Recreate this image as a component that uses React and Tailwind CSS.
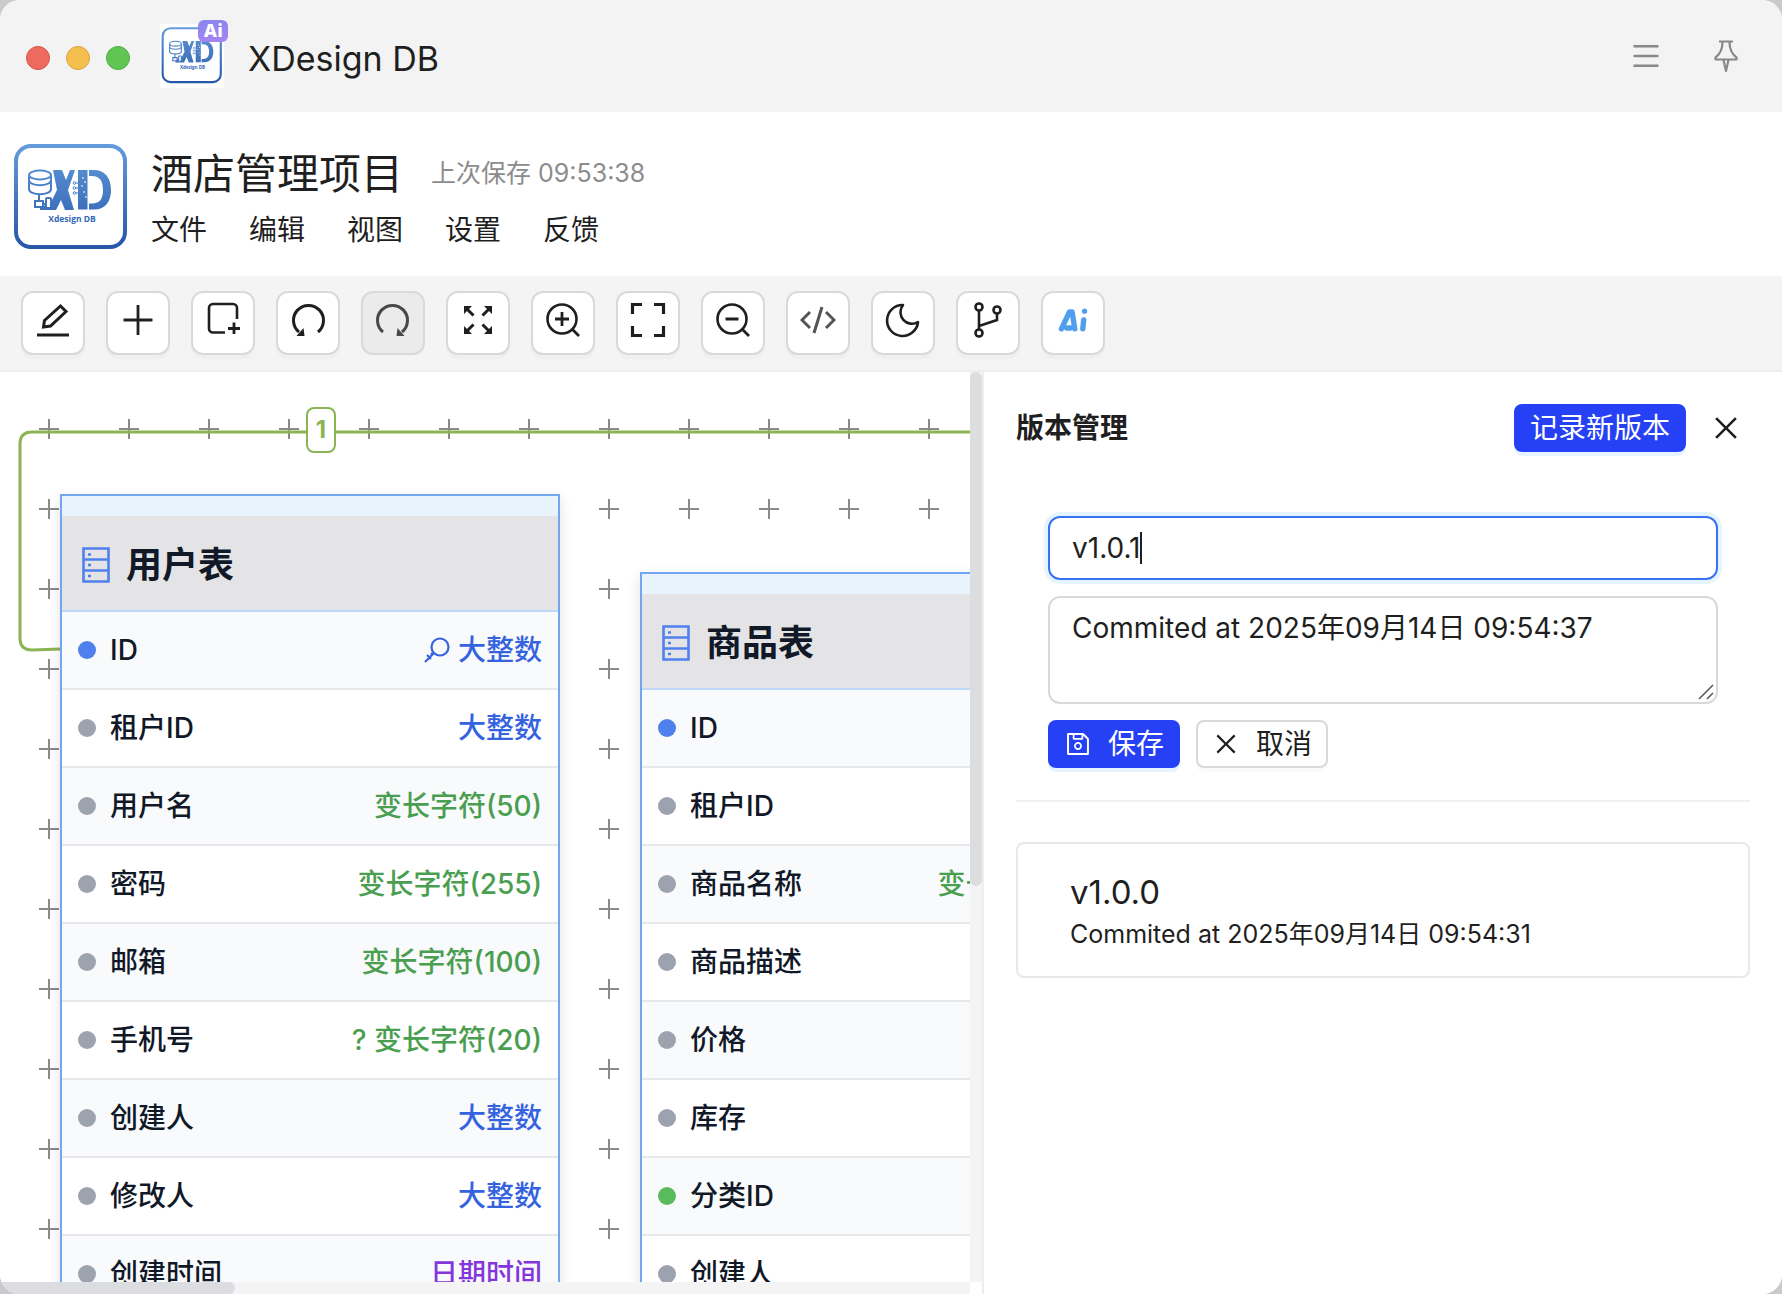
import { useState } from 'react';
import { AiOutlineClose, AiOutlineSave, AiOutlineMenu } from 'react-icons/ai';

const Svg = ({ children, size = 36, ...rest }) => (
  <svg
    width={size}
    height={size}
    viewBox="0 0 36 36"
    fill="none"
    stroke="currentColor"
    strokeWidth="2.6"
    aria-hidden="true"
    {...rest}
  >
    {children}
  </svg>
);

const EditIcon = () => (
  <Svg>
    <path d="M2 33h32" strokeWidth="3" />
    <path d="M8.500 25l1-6.500L25.500 4l5.500 5.500L15.500 24z" strokeWidth="3" />
  </Svg>
);

const PlusIcon = () => (
  <Svg>
    <path d="M18 3v30M3.500 18h29" strokeWidth="2.800" />
  </Svg>
);

const AddBoxIcon = () => (
  <Svg>
    <path d="M20 30.500H8a4 4 0 0 1-4-4V6a4 4 0 0 1 4-4h20a4 4 0 0 1 4 4v11" />
    <path d="M29 20.500v11.500M23 26.500h12" strokeWidth="2.800" />
  </Svg>
);

const UndoIcon = () => (
  <Svg>
    <path d="M28 30A15 15 0 1 0 9 30" strokeWidth="3" />
    <path d="M6.500 34h8l-1-8z" fill="currentColor" strokeWidth="0" />
  </Svg>
);

const RedoIcon = () => (
  <Svg>
    <path d="M8 30A15 15 0 1 1 27 30" strokeWidth="3" />
    <path d="M29.500 34h-8l1-8z" fill="currentColor" strokeWidth="0" />
  </Svg>
);

const ExpandIcon = () => (
  <Svg>
    <path d="M6 6l7.500 7.500M30 6l-7.500 7.500M6 30l7.500-7.500M30 30l-7.500-7.500" strokeWidth="3" />
    <path
      d="M4 4h8l-8 8zM32 4v8l-8-8zM4 32v-8l8 8zM32 32h-8l8-8z"
      fill="currentColor"
      strokeWidth="0"
    />
  </Svg>
);

const ZoomInIcon = () => (
  <Svg>
    <circle cx="17" cy="17" r="14.500" />
    <path d="M27 27l7 7M17 10v14M10 17h14" strokeWidth="2.800" />
  </Svg>
);

const ZoomOutIcon = () => (
  <Svg>
    <circle cx="17" cy="17" r="14.500" />
    <path d="M27 27l7 7M10.500 17h13" strokeWidth="2.800" />
  </Svg>
);

const FrameIcon = () => (
  <Svg>
    <path d="M2.500 12V2.500H12M24 2.500h9.500V12M33.500 24v9.500H24M12 33.500H2.500V24" strokeWidth="3.200" />
  </Svg>
);

const CodeIcon = () => (
  <Svg stroke="#555">
    <path d="M10 10l-8 8 8 8M26 10l8 8-8 8M22 5l-8 26" strokeWidth="3" />
  </Svg>
);

const MoonIcon = () => (
  <Svg>
    <path d="M18 3A15.500 15.500 0 1 0 33 20A11.500 11.500 0 0 1 18 3z" strokeLinejoin="round" />
  </Svg>
);

const BranchIcon = () => (
  <Svg>
    <circle cx="9" cy="5" r="3.500" />
    <circle cx="27" cy="8" r="3.500" />
    <circle cx="9" cy="31" r="3.500" />
    <path d="M9 9v18M27 12v6L9 24" />
  </Svg>
);

const AiMark = () => (
  <Svg size={32} strokeLinecap="round" strokeLinejoin="round" strokeWidth="6">
    <path d="M5 28L14 9h3l3 19M11 27h4" />
    <path d="M30 18l-1 10M31 8v.1" />
  </Svg>
);

const PinIcon = () => (
  <Svg size={32} viewBox="0 0 32 32" strokeWidth="2.200" strokeLinejoin="round">
    <path d="M9 1.500h14M12.500 2c0 6-1 11-7 15.500v2h21v-2c-6-4.500-7-9.500-7-15.500M13.500 20l2.500 11 2.500-11" />
  </Svg>
);

const tools = [
  { label: '编辑', icon: EditIcon },
  { label: '新增', icon: PlusIcon },
  { label: '新增区域', icon: AddBoxIcon },
  { label: '撤销', icon: UndoIcon },
  { label: '重做', icon: RedoIcon, disabled: true },
  { label: '展开', icon: ExpandIcon },
  { label: '放大', icon: ZoomInIcon },
  { label: '适应画布', icon: FrameIcon },
  { label: '缩小', icon: ZoomOutIcon },
  { label: '代码', icon: CodeIcon },
  { label: '深色模式', icon: MoonIcon },
  { label: '版本管理', icon: BranchIcon },
  { label: 'AI', icon: AiMark, ai: true },
];

const menus = ['文件', '编辑', '视图', '设置', '反馈'];

const userTable = {
  name: '用户表',
  fields: [
    { name: 'ID', type: '大整数', kind: 'int', dot: 'primary', pk: true },
    { name: '租户ID', type: '大整数', kind: 'int' },
    { name: '用户名', type: '变长字符(50)', kind: 'string' },
    { name: '密码', type: '变长字符(255)', kind: 'string' },
    { name: '邮箱', type: '变长字符(100)', kind: 'string' },
    { name: '手机号', type: '? 变长字符(20)', kind: 'string' },
    { name: '创建人', type: '大整数', kind: 'int' },
    { name: '修改人', type: '大整数', kind: 'int' },
    { name: '创建时间', type: '日期时间', kind: 'date' },
  ],
};

const goodsTable = {
  name: '商品表',
  fields: [
    { name: 'ID', dot: 'primary' },
    { name: '租户ID' },
    { name: '商品名称', type: '变长字符(255)', kind: 'string' },
    { name: '商品描述' },
    { name: '价格' },
    { name: '库存' },
    { name: '分类ID', dot: 'foreign' },
    { name: '创建人' },
  ],
};

const dotColors = {
  primary: 'bg-[#4f80ee]',
  foreign: 'bg-[#5abb5e]',
};

const typeColors = {
  int: 'text-[#3563e0]',
  string: 'text-[#4a9e50]',
  date: 'text-[#8436dc]',
};

const Logo = ({ className, id }) => (
  <svg className={className} viewBox="0 0 120 120" role="img" aria-label="XDesign DB">
    <defs>
      <linearGradient id={id} x1="0" y1="0" x2="0" y2="120" gradientUnits="userSpaceOnUse">
        <stop offset="0" stopColor="#68a0e0" />
        <stop offset="1" stopColor="#2050a4" />
      </linearGradient>
    </defs>
    <rect width="120" height="120" fill="#fff" />
    <rect x="5" y="8" width="109" height="101" rx="15" fill="#fff" stroke={`url(#${id})`} strokeWidth="4" />
    <g fill={`url(#${id})`}>
      <path d="M42 32h9l4 10 4-10h5L57 52l6 20H54l-4-10-5 10h-9l10-20z" />
      <path d="M67 32h9.500v39.500H67z" />
      <path d="M78 32h5c11 0 17 8 17 20s-6 19.500-17 19.500h-5v-6h3c8 0 11-5 11-13.500s-3-14-11-14h-3z" />
      <path d="M29 70l4-3 4 5h-8z" />
    </g>
    <g fill="none" stroke={`url(#${id})`} strokeWidth="2">
      <path d="M18 37v14c0 7 22 7 22 0V37" fill="#fff" />
      <ellipse cx="29" cy="37" rx="11" ry="4.500" fill="#fff" />
      <path d="M18 42c0 7 22 7 22 0M28 56v7M24 63h8v6h-8zM32 66h3" />
      <rect x="35" y="60" width="5" height="10" rx="1" fill="#fff" />
    </g>
    <g fill="#fff" stroke={`url(#${id})`} strokeWidth="1">
      <path d="M64 45h4M64 50h4M64 55h4" />
      <circle cx="63.500" cy="45" r="1.300" />
      <circle cx="63.500" cy="50" r="1.300" />
      <circle cx="63.500" cy="55" r="1.300" />
    </g>
    <path d="M71 40h2M73 44h2M70 48h2M72 54h2M74 59h2" stroke="#fff" strokeWidth="1.200" />
    <text x="61" y="84" textAnchor="middle" fontSize="8.500" fontWeight="700" fill="#3467b8" fontFamily="Open Sans, sans-serif">
      Xdesign DB
    </text>
  </svg>
);

const ServerIcon = () => (
  <svg width="28" height="36" viewBox="0 0 28 36" fill="none" stroke="#4f80ee" strokeWidth="2.600" aria-hidden="true">
    <path d="M1.500 1.500h25v33h-25zM1.500 12.500h25M1.500 23.500h25" />
    <path d="M6 7.500h3M6 18h3M6 29h3" />
  </svg>
);

const KeyIcon = () => (
  <svg width="26" height="26" viewBox="0 0 26 26" fill="none" stroke="currentColor" strokeWidth="2.200" aria-hidden="true">
    <circle cx="16" cy="10" r="8.500" />
    <path d="M10 16l-9 9M3 18l4 4M7 16l2 2" />
  </svg>
);

const TableCard = ({ table, className }) => (
  <section
    className={`absolute w-[500px] border-2 border-[#73a5f0] bg-white shadow-[0_4px_12px_rgba(0,0,0,0.12)] ${className}`}
  >
    <div className="h-5 bg-[#e9f3fe]" />
    <h2 className="flex h-24 items-center gap-4 border-b-2 border-[#bfd7fb] bg-[#e4e4e6] px-5 pt-1 text-[36px] font-semibold text-[#111827]">
      <ServerIcon />
      {table.name}
    </h2>
    <ul>
      {table.fields.map((field) => (
        <li
          key={field.name}
          className="flex h-[78px] items-center border-b-2 border-[#e5e7eb] px-4 text-[28px] font-medium odd:bg-[#f9fafc]"
        >
          <span className={`mr-3.5 size-[18px] rounded-full ${dotColors[field.dot] || 'bg-[#9ca3af]'}`} />
          <span className="text-[#111827]">{field.name}</span>
          <span className={`ml-auto flex items-center gap-2 ${typeColors[field.kind] || ''}`}>
            {field.pk && <KeyIcon />}
            {field.type}
          </span>
        </li>
      ))}
    </ul>
  </section>
);

const Canvas = () => (
  <div className="grid min-w-0 flex-1 grid-cols-[minmax(0,1fr)_12px] grid-rows-[minmax(0,1fr)_12px]">
    <main className="relative overflow-hidden bg-white">
      <svg className="absolute inset-0 size-full" aria-hidden="true">
        <defs>
          <pattern id="cross" x="9" y="17" width="80" height="80" patternUnits="userSpaceOnUse">
            <path d="M40 30v20M30 40h20" stroke="#8a8a8a" strokeWidth="2" />
          </pattern>
        </defs>
        <rect y="40" width="100%" height="100%" fill="url(#cross)" />
        <path d="M970 60H32q-12 0-12 12v194q0 12 12 12l28-1" fill="none" stroke="#8bb455" strokeWidth="3" />
      </svg>
      <span className="absolute top-[35px] left-[306px] flex h-[46px] w-[30px] items-center justify-center rounded-lg border-2 border-[#8bb455] bg-white text-2xl font-bold text-[#8bb455]">
        1
      </span>
      <TableCard table={userTable} className="top-[122px] left-[60px]" />
      <TableCard table={goodsTable} className="top-[200px] left-[640px]" />
    </main>
    <div className="bg-[#f4f4f4]">
      <div className="h-[514px] rounded-full bg-[#dcdde1]" />
    </div>
    <div className="bg-[#f4f4f4]">
      <div className="h-3 w-[235px] rounded-r-full bg-[#dcdde1]" />
    </div>
    <div className="bg-white" />
  </div>
);

const VersionPanel = () => {
  const [version, setVersion] = useState('v1.0.1');
  const [remark, setRemark] = useState('Commited at 2025年09月14日 09:54:37');

  return (
    <aside className="w-[800px] shrink-0 border-l-2 border-[#eeeeee] bg-white px-8 pt-8 text-[28px]">
      <div className="flex h-12 items-center pr-2">
        <h2 className="font-semibold">版本管理</h2>
        <button
          type="button"
          className="ml-auto h-12 rounded-lg bg-[#2641f5] px-4 leading-none text-white shadow-[0_4px_0_rgba(5,145,255,0.1)]"
        >
          记录新版本
        </button>
        <button type="button" aria-label="关闭" className="ml-6 flex size-8 items-center justify-center">
          <AiOutlineClose size={32} />
        </button>
      </div>

      <form className="mt-16 px-8">
        <div className="relative">
          <input
            aria-label="版本号"
            value={version}
            onChange={(e) => setVersion(e.target.value)}
            className="block h-16 w-full rounded-xl border-2 border-[#3573f0] px-[22px] caret-transparent shadow-[0_0_0_4px_rgba(5,145,255,0.1)] outline-none"
          />
          {/* caret follows the typed text */}
          <span className="pointer-events-none absolute inset-y-0 left-6 flex items-center" aria-hidden="true">
            <span className="invisible">{version}</span>
            <span className="h-8 w-0.5 bg-[#1f1f1f]" />
          </span>
        </div>
        <div className="relative mt-4">
          <textarea
            aria-label="版本说明"
            value={remark}
            onChange={(e) => setRemark(e.target.value)}
            className="block h-[108px] w-full resize-none rounded-xl border-2 border-[#d9d9d9] px-[22px] py-2 leading-11 outline-none"
          />
          <svg
            className="pointer-events-none absolute right-1 bottom-1"
            width="16"
            height="16"
            viewBox="0 0 16 16"
            stroke="#555"
            strokeWidth="1.500"
            aria-hidden="true"
          >
            <path d="M1 15L15 1M9 15l6-6" />
          </svg>
        </div>
        <div className="mt-4 flex gap-4">
          <button
            type="button"
            className="flex h-12 items-center gap-4 rounded-lg bg-[#2641f5] px-4 leading-none text-white shadow-[0_4px_0_rgba(5,145,255,0.1)]"
          >
            <AiOutlineSave size={28} />
            保存
          </button>
          <button
            type="button"
            className="flex h-12 items-center gap-4 rounded-lg border-2 border-[#d9d9d9] bg-white px-3.5 leading-none shadow-[0_4px_0_rgba(0,0,0,0.02)]"
          >
            <AiOutlineClose size={28} />
            取消
          </button>
        </div>
      </form>

      <hr className="mt-8 border-t-2 border-[#f0f0f0]" />

      <article className="mt-10 rounded-lg border-2 border-[#e8e8e8] px-[52px] pt-7 pb-5">
        <h3 className="text-[33px] leading-10">v1.0.0</h3>
        <p className="text-[25px] leading-11">Commited at 2025年09月14日 09:54:31</p>
      </article>
    </aside>
  );
};

export default function App() {
  return (
    <div className="h-screen bg-[#c9cacc]">
      <div className="flex h-full flex-col overflow-hidden rounded-[20px] bg-white font-['Inter','Noto_Sans_CJK_SC',sans-serif] text-[#1f1f1f]">
        <header className="flex h-28 shrink-0 items-center bg-[#f3f3f3] pr-10 pl-[26px]">
          <div className="flex gap-4 pt-1">
            <span className="size-6 rounded-full border border-[#d9534a] bg-[#ec6a5e]" />
            <span className="size-6 rounded-full border border-[#d9a23a] bg-[#f4bf4f]" />
            <span className="size-6 rounded-full border border-[#4fae43] bg-[#61c554]" />
          </div>
          <div className="relative ml-[30px]">
            <Logo id="logo-small" className="size-16" />
            <span className="absolute -top-1 -right-1 flex h-[22px] w-[30px] items-center justify-center rounded-md bg-linear-to-b from-[#8a86ee] to-[#a583f2] text-lg leading-none font-extrabold text-white">
              Ai
            </span>
          </div>
          <h1 className="ml-6 pt-1 text-[34px]">XDesign DB</h1>
          <div className="ml-auto flex gap-12 text-[#888888]">
            <button type="button" aria-label="菜单">
              <AiOutlineMenu size={32} />
            </button>
            <button type="button" aria-label="置顶">
              <PinIcon />
            </button>
          </div>
        </header>

        <div className="flex h-[164px] shrink-0 items-start gap-5 pt-[26px] pl-[11px]">
          <Logo id="logo-large" className="size-[120px]" />
          <div className="pt-2">
            <div className="flex items-center gap-7">
              <h2 className="text-[42px] leading-14">酒店管理项目</h2>
              <span className="text-[25px] text-[#8c8c8c]">上次保存 09:53:38</span>
            </div>
            <nav className="flex gap-[42px] text-[28px] leading-14">
              {menus.map((menu) => (
                <button key={menu} type="button">
                  {menu}
                </button>
              ))}
            </nav>
          </div>
        </div>

        <div className="flex h-24 shrink-0 items-center gap-[21px] border-b-2 border-[#eeeeee] bg-[#f4f4f4] px-[21px]">
          {tools.map((tool) => {
            const Icon = tool.icon;
            return (
              <button
                key={tool.label}
                type="button"
                aria-label={tool.label}
                disabled={tool.disabled}
                className={`flex size-16 items-center justify-center rounded-xl border-2 border-[#d9d9d9] pb-1.5 ${
                  tool.disabled
                    ? 'bg-[#ebebeb] text-[#484848]'
                    : 'bg-white shadow-[0_4px_0_rgba(0,0,0,0.02)]'
                } ${tool.ai ? 'text-[#4f9fee]' : ''}`}
              >
                <Icon />
              </button>
            );
          })}
        </div>

        <div className="flex min-h-0 flex-1">
          <Canvas />
          <VersionPanel />
        </div>
      </div>
    </div>
  );
}
